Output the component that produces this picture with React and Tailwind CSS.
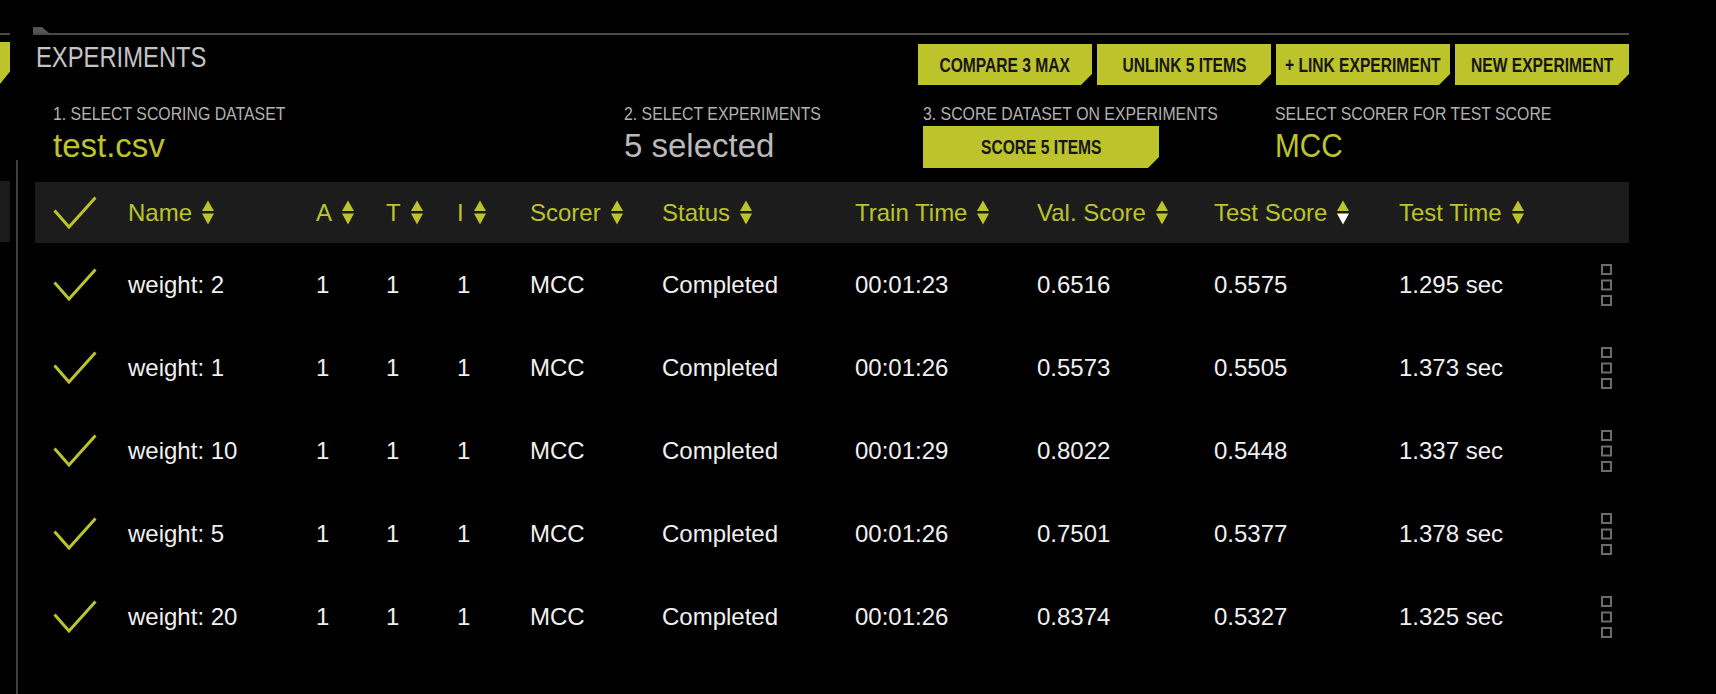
import React from 'react';

const YELLOW = '#bdc42b';

const columns = [
  { key: 'check', width: 'w-[75px]' },
  { key: 'name', label: 'Name', width: 'w-[188px]' },
  { key: 'a', label: 'A', width: 'w-[70px]' },
  { key: 't', label: 'T', width: 'w-[71px]' },
  { key: 'i', label: 'I', width: 'w-[73px]' },
  { key: 'scorer', label: 'Scorer', width: 'w-[132px]' },
  { key: 'status', label: 'Status', width: 'w-[193px]' },
  { key: 'train', label: 'Train Time', width: 'w-[182px]' },
  { key: 'val', label: 'Val. Score', width: 'w-[177px]' },
  { key: 'test', label: 'Test Score', width: 'w-[185px]', active: true },
  { key: 'time', label: 'Test Time', width: 'w-[202px]' },
  { key: 'menu', width: 'w-[20px]' },
];

const experiments = [
  { name: 'weight: 2', a: 1, t: 1, i: 1, scorer: 'MCC', status: 'Completed', train: '00:01:23', val: '0.6516', test: '0.5575', time: '1.295 sec' },
  { name: 'weight: 1', a: 1, t: 1, i: 1, scorer: 'MCC', status: 'Completed', train: '00:01:26', val: '0.5573', test: '0.5505', time: '1.373 sec' },
  { name: 'weight: 10', a: 1, t: 1, i: 1, scorer: 'MCC', status: 'Completed', train: '00:01:29', val: '0.8022', test: '0.5448', time: '1.337 sec' },
  { name: 'weight: 5', a: 1, t: 1, i: 1, scorer: 'MCC', status: 'Completed', train: '00:01:26', val: '0.7501', test: '0.5377', time: '1.378 sec' },
  { name: 'weight: 20', a: 1, t: 1, i: 1, scorer: 'MCC', status: 'Completed', train: '00:01:26', val: '0.8374', test: '0.5327', time: '1.325 sec' },
];

const notch = '[clip-path:polygon(0_0,100%_0,100%_calc(100%_-_11px),calc(100%_-_11px)_100%,0_100%)]';

// condensed caps: no narrow face is installed, so squeeze Liberation Sans
const Condensed = ({ children, className = '' }) => (
  <span className={`inline-block whitespace-nowrap ${className}`}>{children}</span>
);

const Check = () => (
  <svg width="44" height="33" viewBox="0 0 44 33">
    <path d="M1.5 14.5 L16 31 L42.5 1.5" fill="none" stroke={YELLOW} strokeWidth="3" />
  </svg>
);

const SortArrows = ({ active }) => (
  <svg width="12" height="25" viewBox="0 0 12 25" className="ml-[10px] shrink-0">
    <path d="M6 0.5 L12 11 L0 11 Z" fill={YELLOW} />
    <path d="M0 13.5 L12 13.5 L6 24.5 Z" fill={active ? '#ffffff' : YELLOW} />
  </svg>
);

const RowMenu = () => (
  <svg width="12" height="42" viewBox="0 0 12 42">
    <rect x="1" y="1" width="9" height="9" fill="none" stroke="#6c6c6c" strokeWidth="2" />
    <rect x="1" y="16.5" width="9" height="9" fill="none" stroke="#6c6c6c" strokeWidth="2" />
    <rect x="1" y="32" width="9" height="9" fill="none" stroke="#6c6c6c" strokeWidth="2" />
  </svg>
);

const ActionButton = ({ children, className = '' }) => (
  <button
    className={`${notch} bg-[#bdc42b] text-[#161616] font-bold text-[20px] leading-none flex items-center justify-center ${className}`}
  >
    <Condensed className="origin-center scale-x-[0.78]">{children}</Condensed>
  </button>
);

const StepLabel = ({ children }) => (
  <div className="text-[18px] leading-[20px] text-[#b2b2b2]">
    <Condensed className="origin-left scale-x-[0.88]">{children}</Condensed>
  </div>
);

const App = () => {
  return (
    <div className="w-[1716px] h-[694px] bg-black overflow-hidden flex font-['Liberation_Sans',Arial,sans-serif]">
      {/* edge of the previous panel */}
      <div className="w-[10px] shrink-0 flex flex-col">
        <div className="mt-[33px] h-[2px] bg-[#4a4a4a]" />
        <div className="mt-[7px] h-[42px] bg-[#bdc42b] [clip-path:polygon(0_0,100%_0,100%_70%,0_100%)]" />
        <div className="mt-[97px] h-[61px] bg-[#1b1b1b]" />
      </div>
      <div className="ml-[6px] mt-[160px] w-[2px] h-[534px] bg-[#3e3e3e] shrink-0" />

      {/* experiments panel */}
      <div className="ml-[15px] w-[1596px] shrink-0 flex flex-col">
        <div className="pt-[27px]">
          <div className="h-[6px] w-[16px] bg-[#555] [clip-path:polygon(0_0,55%_0,100%_100%,0_100%)]" />
          <div className="h-[2px] bg-[#4a4a4a]" />
        </div>

        <div className="mt-[9px] flex justify-between items-start">
          <h1 className="ml-[3px] -mt-[1px] text-[29px] leading-[29px] text-[#c4c4c4]">
            <Condensed className="origin-left scale-x-[0.82]">EXPERIMENTS</Condensed>
          </h1>
          <div className="flex gap-[5px]">
            <ActionButton className="w-[174px] h-[41px]">COMPARE 3 MAX</ActionButton>
            <ActionButton className="w-[174px] h-[41px]">UNLINK 5 ITEMS</ActionButton>
            <ActionButton className="w-[174px] h-[41px]">+ LINK EXPERIMENT</ActionButton>
            <ActionButton className="w-[174px] h-[41px]">NEW EXPERIMENT</ActionButton>
          </div>
        </div>

        <div className="mt-[19px] pl-[20px] flex">
          <div className="w-[571px]">
            <StepLabel>1. SELECT SCORING DATASET</StepLabel>
            <div className="mt-[4px] text-[33px] leading-[36px] text-[#bdc42b]">test.csv</div>
          </div>
          <div className="w-[299px]">
            <StepLabel>2. SELECT EXPERIMENTS</StepLabel>
            <div className="mt-[4px] text-[33px] leading-[36px] text-[#bababa]">5 selected</div>
          </div>
          <div className="w-[352px]">
            <StepLabel>3. SCORE DATASET ON EXPERIMENTS</StepLabel>
            <ActionButton className="mt-[2px] w-[236px] h-[42px]">SCORE 5 ITEMS</ActionButton>
          </div>
          <div>
            <StepLabel>SELECT SCORER FOR TEST SCORE</StepLabel>
            <div className="mt-[4px] text-[33px] leading-[36px] text-[#bdc42b]">
              <Condensed className="origin-left scale-x-[0.9]">MCC</Condensed>
            </div>
          </div>
        </div>

        {/* table */}
        <div className="mt-[14px] ml-[2px]">
          <div className="h-[61px] bg-[#1c1c1c] flex items-center pl-[18px] text-[24px] text-[#bdc42b]">
            {columns.map((col) => (
              <div key={col.key} className={`${col.width} shrink-0 flex items-center`}>
                {col.key === 'check' && <Check />}
                {col.label && (
                  <>
                    <span>{col.label}</span>
                    <SortArrows active={col.active} />
                  </>
                )}
              </div>
            ))}
          </div>

          {experiments.map((exp) => (
            <div key={exp.name} className="h-[83px] flex items-center pl-[18px] text-[24px] text-[#f0f0f0]">
              {columns.map((col) => (
                <div key={col.key} className={`${col.width} shrink-0 flex items-center`}>
                  {col.key === 'check' ? <Check /> : col.key === 'menu' ? <RowMenu /> : exp[col.key]}
                </div>
              ))}
            </div>
          ))}
        </div>
      </div>
    </div>
  );
};

export default App;
